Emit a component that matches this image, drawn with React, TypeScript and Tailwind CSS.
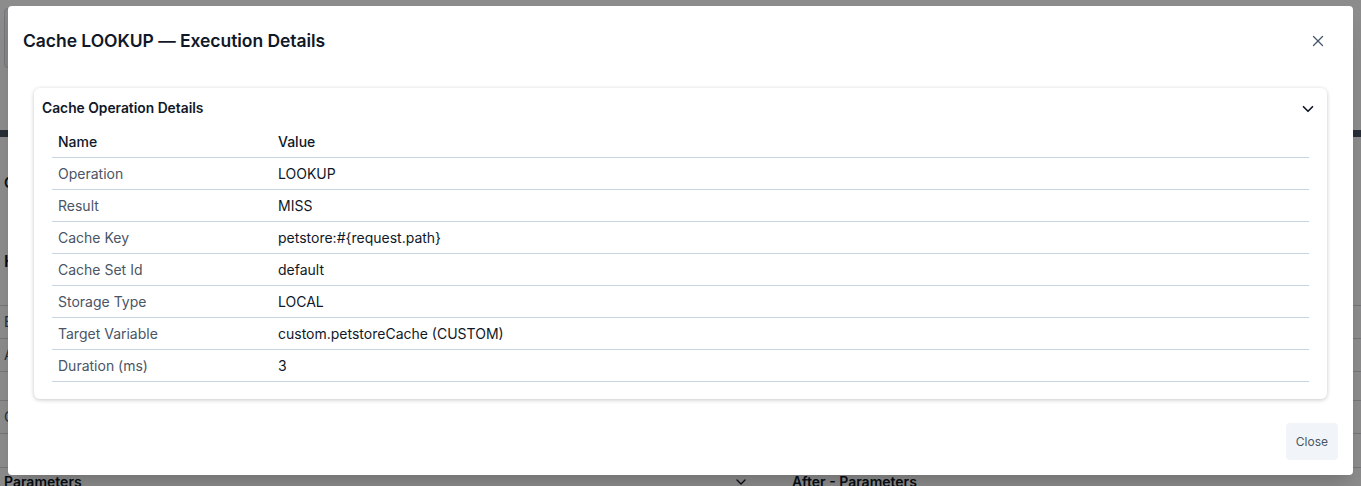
import { X, ChevronDown } from 'lucide-react';

const rows: [string, string][] = [
  ['Operation', 'LOOKUP'],
  ['Result', 'MISS'],
  ['Cache Key', 'petstore:#{request.path}'],
  ['Cache Set Id', 'default'],
  ['Storage Type', 'LOCAL'],
  ['Target Variable', 'custom.petstoreCache (CUSTOM)'],
  ['Duration (ms)', '3'],
];

// Page behind the dialog, mostly hidden by the overlay
function BackgroundPage() {
  return (
    <div className="h-[486px] w-full overflow-hidden bg-white text-sm text-gray-900">
      <div className="h-[130px] px-1 pt-2">
        <div className="h-[60px] w-[40px] rounded border border-gray-300 bg-gray-100" />
      </div>
      <div className="h-[7px] bg-gray-600" />
      <div className="flex h-[349px] flex-col">
        <div className="px-1 pt-9 font-semibold">Cache</div>
        <div className="px-1 pt-14 text-base font-semibold">History</div>
        <div className="mt-8 border-t border-gray-300 px-1 py-1.5 text-gray-600">Executed</div>
        <div className="border-t border-gray-300 px-1 py-1.5 text-gray-600">All</div>
        <div className="border-t border-gray-300 px-1 py-3.5" />
        <div className="border-t border-gray-300 px-1 py-1.5 text-gray-600">Options</div>
        <div className="border-t border-gray-300 px-1 py-3" />
        <div className="mt-auto flex translate-y-[6px] items-center border-t border-gray-300">
          <div className="flex w-[765px] items-center justify-between px-1 pt-1">
            <span className="font-semibold">Parameters</span>
            <ChevronDown className="mr-3 h-4 w-4" />
          </div>
          <div className="ml-[27px] pt-1 font-semibold">After - Parameters</div>
        </div>
      </div>
    </div>
  );
}

export default function App() {
  return (
    <div className="relative h-[486px] w-[1361px] overflow-hidden font-['Inter',sans-serif]">
      <BackgroundPage />

      {/* Overlay + dialog */}
      <div className="absolute inset-0 bg-black/45 px-2 pt-1.5">
        <div className="flex h-[469px] flex-col rounded bg-white shadow-xl">
          {/* Header */}
          <div className="flex items-center justify-between pl-[15px] pr-[26px] pt-[22px]">
            <h2 className="text-[17.5px] font-semibold tracking-[-0.05px] text-gray-900">
              Cache LOOKUP — Execution Details
            </h2>
            <button className="text-slate-600">
              <X className="h-[18px] w-[18px]" strokeWidth={1.75} />
            </button>
          </div>

          {/* Body */}
          <div className="px-[26px] pt-[34px]">
            <div className="rounded-md bg-white shadow-[0_1px_4px_rgba(0,0,0,0.22)]">
              <div className="flex items-center justify-between pl-2 pr-[10px] pt-[10px]">
                <span className="text-[13.8px] font-semibold text-gray-900">Cache Operation Details</span>
                <ChevronDown className="h-[18px] w-[18px] text-gray-900" strokeWidth={2.25} />
              </div>
              <div className="px-[18px] pb-[17px] pt-[7px]">
                <table className="w-full table-fixed border-collapse text-sm">
                  <thead>
                    <tr className="border-b border-slate-300">
                      <th className="h-8 w-[220px] px-1.5 text-left font-medium text-gray-900">Name</th>
                      <th className="h-8 px-1.5 text-left font-medium text-gray-900">Value</th>
                    </tr>
                  </thead>
                  <tbody>
                    {rows.map(([name, value]) => (
                      <tr key={name} className="border-b border-slate-300">
                        <td className="h-8 px-1.5 text-gray-600">{name}</td>
                        <td className="h-8 px-1.5 text-gray-900">{value}</td>
                      </tr>
                    ))}
                  </tbody>
                </table>
              </div>
            </div>
          </div>

          {/* Footer */}
          <div className="mt-auto flex justify-end pb-[15px] pr-[15px]">
            <button className="h-[37px] rounded bg-slate-100 px-2.5 text-xs text-gray-600">
              Close
            </button>
          </div>
        </div>
      </div>
    </div>
  );
}
